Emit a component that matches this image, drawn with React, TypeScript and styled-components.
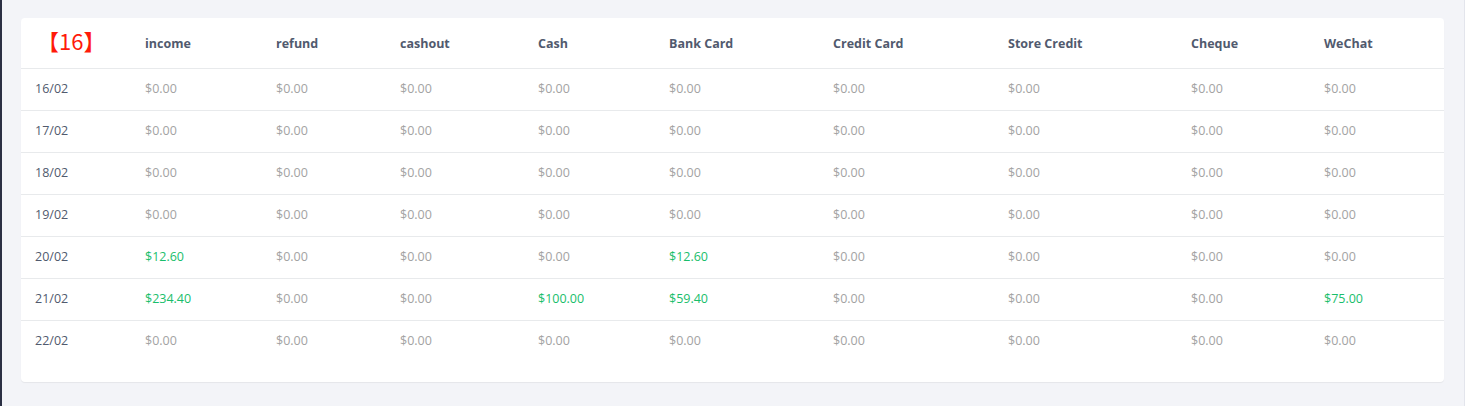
import React from 'react'
import styled, { createGlobalStyle } from 'styled-components'

const GlobalStyle = createGlobalStyle`
  html, body {
    margin: 0;
    padding: 0;
    background: #f3f4f8;
  }
  body {
    font-family: "Open Sans", "Noto Sans", Arial, sans-serif;
  }
`

const COLS = '110px 131px 124px 138px 131px 164px 175px 183px 133px 1fr'

const Page = styled.div`
  height: 406px;
  box-sizing: border-box;
  border-left: 2px solid #2b3044;
  border-right: 1px solid #e3e5ec;
  padding: 18px 20px 24px 19px;
`

const Card = styled.div`
  background: #fff;
  border-radius: 4px;
  box-shadow: 0 1px 1px rgba(0, 0, 0, 0.06);
  padding-bottom: 19px;
`

const Row = styled.div<{ $head?: boolean; $last?: boolean }>`
  display: grid;
  grid-template-columns: ${COLS};
  align-items: center;
  height: ${({ $head }) => ($head ? 51 : 42)}px;
  box-sizing: border-box;
  padding: ${({ $head }) => ($head ? '0' : '0 0 3px')};
  border-bottom: ${({ $last }) => ($last ? 'none' : '1px solid #e8eaec')};
`

const HeadCell = styled.div`
  padding-left: 14px;
  font-size: 12.5px;
  font-weight: 700;
  color: #515a6e;
  white-space: nowrap;
`

const Week = styled.span`
  display: inline-block;
  margin-left: 2px;
  margin-top: -3px;
  font-size: 22px;
  line-height: 1;
  font-weight: 400;
  color: #ff1a0a;
  font-family: "Noto Sans CJK SC", "Noto Sans", sans-serif;
`

const DateCell = styled.div`
  padding-left: 14px;
  font-size: 12.5px;
  color: #515a6e;
`

const Amount = styled.div<{ $positive?: boolean }>`
  padding-left: 14px;
  font-size: 12.5px;
  color: ${({ $positive }) => ($positive ? '#19be6b' : '#a3a3a3')};
`

const headers = [
  'income',
  'refund',
  'cashout',
  'Cash',
  'Bank Card',
  'Credit Card',
  'Store Credit',
  'Cheque',
  'WeChat',
]

const Z = 0
const data: { date: string; values: number[] }[] = [
  { date: '16/02', values: [Z, Z, Z, Z, Z, Z, Z, Z, Z] },
  { date: '17/02', values: [Z, Z, Z, Z, Z, Z, Z, Z, Z] },
  { date: '18/02', values: [Z, Z, Z, Z, Z, Z, Z, Z, Z] },
  { date: '19/02', values: [Z, Z, Z, Z, Z, Z, Z, Z, Z] },
  { date: '20/02', values: [12.6, Z, Z, Z, 12.6, Z, Z, Z, Z] },
  { date: '21/02', values: [234.4, Z, Z, 100, 59.4, Z, Z, Z, 75] },
  { date: '22/02', values: [Z, Z, Z, Z, Z, Z, Z, Z, Z] },
]

const money = (v: number) => `$${v.toFixed(2)}`

export default function App() {
  return (
    <>
      <GlobalStyle />
      <Page>
        <Card>
          <Row $head>
            <HeadCell>
              <Week>【16】</Week>
            </HeadCell>
            {headers.map((h) => (
              <HeadCell key={h}>{h}</HeadCell>
            ))}
          </Row>
          {data.map((row, i) => (
            <Row key={row.date} $last={i === data.length - 1}>
              <DateCell>{row.date}</DateCell>
              {row.values.map((v, j) => (
                <Amount key={j} $positive={v > 0}>
                  {money(v)}
                </Amount>
              ))}
            </Row>
          ))}
        </Card>
      </Page>
    </>
  )
}
